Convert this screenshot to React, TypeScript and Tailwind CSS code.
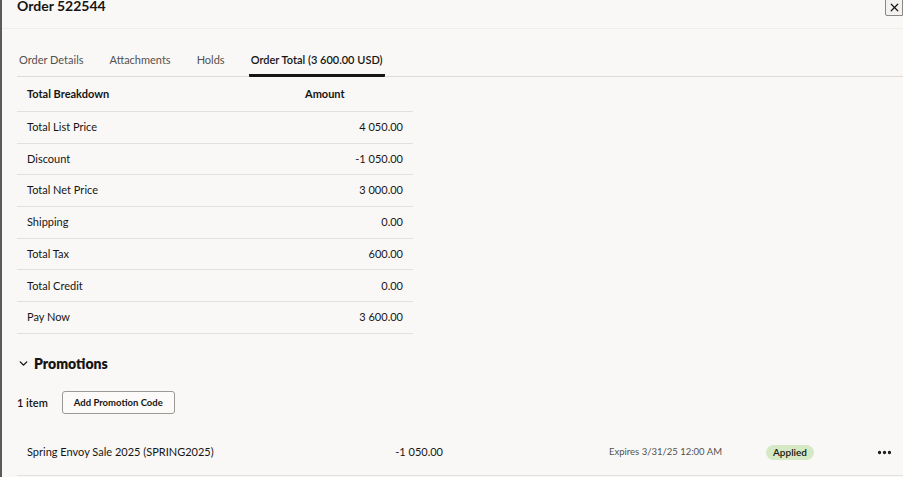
import { ChevronDown, MoreHorizontal, X } from 'lucide-react';

const rows = [
    { label: 'Total List Price', amount: '4 050.00' },
    { label: 'Discount', amount: '-1 050.00' },
    { label: 'Total Net Price', amount: '3 000.00' },
    { label: 'Shipping', amount: '0.00' },
    { label: 'Total Tax', amount: '600.00' },
    { label: 'Total Credit', amount: '0.00' },
    { label: 'Pay Now', amount: '3 600.00' },
];

const tabs = ['Order Details', 'Attachments', 'Holds', 'Order Total (3 600.00 USD)'];

export default function App() {
    return (
        <div
            className="w-[903px] h-[477px] overflow-hidden bg-[#f9f8f7] text-[#161513] border-l-2 border-[#5a5a5a]"
            style={{ fontFamily: 'Lato, "Noto Sans", sans-serif' }}
        >
            {/* Header */}
            <div className="flex items-start justify-between h-[29px] border-b border-[#efedea] pl-[15px]">
                <h1 className="text-[14px] font-bold leading-[14px] -mt-[1px]">Order 522544</h1>
                <button className="w-[18px] h-[17px] -mt-[1px] flex items-center justify-center border border-[#8a8784] rounded-bl-[2px] bg-[#f3f2f0]">
                    <X size={13} strokeWidth={2.2} />
                </button>
            </div>

            {/* Tabs */}
            <div className="ml-[15px] mt-[23px] flex gap-[22px] border-b border-[#dedbd7] h-[25px] text-[11px] leading-[16px]">
                {tabs.map((tab, i) => (
                    <div
                        key={tab}
                        className={
                            i === 3
                                ? 'px-[2px] border-b-[3px] border-[#161513] text-[#161513] font-semibold h-[25px] rounded-b-[1px]'
                                : 'px-[2px] text-[#55524e] h-[25px]'
                        }
                    >
                        {tab}
                    </div>
                ))}
            </div>

            {/* Breakdown table */}
            <div className="ml-[15px] w-[396px] text-[11px]">
                <div className="flex h-[35px] items-center border-b border-[#e4e1dd] font-bold">
                    <div className="pl-[10px] w-[288px]">Total Breakdown</div>
                    <div>Amount</div>
                </div>
                {rows.map((row) => (
                    <div
                        key={row.label}
                        className="flex h-[31.7px] items-center justify-between border-b border-[#e4e1dd] px-[10px]"
                    >
                        <span>{row.label}</span>
                        <span>{row.amount}</span>
                    </div>
                ))}
            </div>

            {/* Promotions */}
            <div className="ml-[15px] mt-[20px] h-[20px] flex items-center gap-[4px]">
                <ChevronDown size={13} strokeWidth={2.6} />
                <span className="text-[14px] font-extrabold">Promotions</span>
            </div>

            <div className="ml-[15px] mt-[18px] h-[22px] flex items-center gap-[14px] text-[11px]">
                <span className="font-semibold">1 item</span>
                <button className="h-[23px] px-[11px] border border-[#9c9894] rounded-[3px] bg-[#fcfbfa] text-[9.5px] font-bold">
                    Add Promotion Code
                </button>
            </div>

            <div className="ml-[15px] mt-[16px] h-[46px] flex items-center border-b border-[#e4e1dd] text-[11px] whitespace-nowrap">
                <span className="pl-[10px] w-[260px]">Spring Envoy Sale 2025 (SPRING2025)</span>
                <span className="w-[166px] text-right">-1 050.00</span>
                <span className="ml-[166px] w-[111px] text-[9.5px] text-[#55524e]">Expires 3/31/25 12:00 AM</span>
                <span className="ml-[46px] h-[15px] px-[7px] flex items-center rounded-full bg-[#d5e9c5] text-[10px] font-semibold">
                    Applied
                </span>
                <MoreHorizontal className="ml-[62px]" size={17} strokeWidth={2.6} />
            </div>
        </div>
    );
}
